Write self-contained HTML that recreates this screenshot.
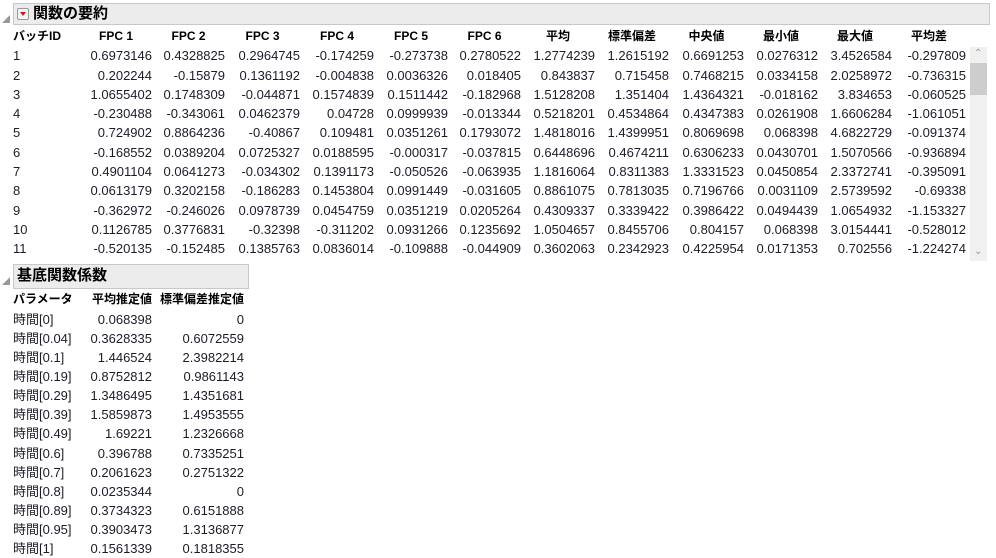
<!DOCTYPE html>
<html><head><meta charset="utf-8"><style>
body{margin:0;width:996px;height:558px;background:#fff;overflow:hidden;font-family:"Liberation Sans","Noto Sans CJK JP",sans-serif;font-size:13px;color:#1c1c28;position:relative}
.hdr{position:absolute;left:13px;background:#ececec;border:1px solid #c8c8c8;box-sizing:border-box;font-weight:bold;font-size:15px;color:#000;line-height:18px}
.tri{position:absolute;left:2px;width:0;height:0;border-left:8px solid transparent;border-bottom:8px solid #999}
table{position:absolute;border-collapse:collapse;table-layout:fixed}
td{padding:0;height:19.3px;text-align:right;white-space:nowrap;line-height:19.3px}
td:first-child{text-align:left}
tr.h td{font-weight:bold;text-align:center;color:#000;font-size:12px}
tr.h td:first-child{text-align:left}
.b td{height:19.08px;line-height:19.08px}
.btn{position:absolute;left:3px;top:4px;width:12px;height:12px;border:1px solid #999;border-radius:2px;background:#f4f4f4;box-sizing:border-box}
.btn:after{content:"";position:absolute;left:2px;top:3px;border-left:3px solid transparent;border-right:3px solid transparent;border-top:4px solid #d01818}
.sb{position:absolute;left:970px;top:47px;width:17px;height:214px;background:#f0f0f0}
.th{position:absolute;left:970px;top:63px;width:17px;height:32px;background:#cdcdcd}
.ar{position:absolute;left:974px;color:#999;font-size:10px}
</style></head><body>
<div class="tri" style="top:15px"></div>
<div class="hdr" style="top:3px;width:977px;height:22px"><div class="btn"></div><span style="position:absolute;left:19px;top:1px">関数の要約</span></div>
<table style="left:13px;top:27px;width:953px">
<colgroup><col style="width:67px"><col style="width:72px"><col style="width:73px"><col style="width:75px"><col style="width:74px"><col style="width:74px"><col style="width:73px"><col style="width:74px"><col style="width:74px"><col style="width:75px"><col style="width:74px"><col style="width:74px"><col style="width:74px"></colgroup>
<tr class="h"><td>バッチID</td><td>FPC 1</td><td>FPC 2</td><td>FPC 3</td><td>FPC 4</td><td>FPC 5</td><td>FPC 6</td><td>平均</td><td>標準偏差</td><td>中央値</td><td>最小値</td><td>最大値</td><td>平均差</td></tr>
<tr><td>1</td><td>0.6973146</td><td>0.4328825</td><td>0.2964745</td><td>-0.174259</td><td>-0.273738</td><td>0.2780522</td><td>1.2774239</td><td>1.2615192</td><td>0.6691253</td><td>0.0276312</td><td>3.4526584</td><td>-0.297809</td></tr>
<tr><td>2</td><td>0.202244</td><td>-0.15879</td><td>0.1361192</td><td>-0.004838</td><td>0.0036326</td><td>0.018405</td><td>0.843837</td><td>0.715458</td><td>0.7468215</td><td>0.0334158</td><td>2.0258972</td><td>-0.736315</td></tr>
<tr><td>3</td><td>1.0655402</td><td>0.1748309</td><td>-0.044871</td><td>0.1574839</td><td>0.1511442</td><td>-0.182968</td><td>1.5128208</td><td>1.351404</td><td>1.4364321</td><td>-0.018162</td><td>3.834653</td><td>-0.060525</td></tr>
<tr><td>4</td><td>-0.230488</td><td>-0.343061</td><td>0.0462379</td><td>0.04728</td><td>0.0999939</td><td>-0.013344</td><td>0.5218201</td><td>0.4534864</td><td>0.4347383</td><td>0.0261908</td><td>1.6606284</td><td>-1.061051</td></tr>
<tr><td>5</td><td>0.724902</td><td>0.8864236</td><td>-0.40867</td><td>0.109481</td><td>0.0351261</td><td>0.1793072</td><td>1.4818016</td><td>1.4399951</td><td>0.8069698</td><td>0.068398</td><td>4.6822729</td><td>-0.091374</td></tr>
<tr><td>6</td><td>-0.168552</td><td>0.0389204</td><td>0.0725327</td><td>0.0188595</td><td>-0.000317</td><td>-0.037815</td><td>0.6448696</td><td>0.4674211</td><td>0.6306233</td><td>0.0430701</td><td>1.5070566</td><td>-0.936894</td></tr>
<tr><td>7</td><td>0.4901104</td><td>0.0641273</td><td>-0.034302</td><td>0.1391173</td><td>-0.050526</td><td>-0.063935</td><td>1.1816064</td><td>0.8311383</td><td>1.3331523</td><td>0.0450854</td><td>2.3372741</td><td>-0.395091</td></tr>
<tr><td>8</td><td>0.0613179</td><td>0.3202158</td><td>-0.186283</td><td>0.1453804</td><td>0.0991449</td><td>-0.031605</td><td>0.8861075</td><td>0.7813035</td><td>0.7196766</td><td>0.0031109</td><td>2.5739592</td><td>-0.69338</td></tr>
<tr><td>9</td><td>-0.362972</td><td>-0.246026</td><td>0.0978739</td><td>0.0454759</td><td>0.0351219</td><td>0.0205264</td><td>0.4309337</td><td>0.3339422</td><td>0.3986422</td><td>0.0494439</td><td>1.0654932</td><td>-1.153327</td></tr>
<tr><td>10</td><td>0.1126785</td><td>0.3776831</td><td>-0.32398</td><td>-0.311202</td><td>0.0931266</td><td>0.1235692</td><td>1.0504657</td><td>0.8455706</td><td>0.804157</td><td>0.068398</td><td>3.0154441</td><td>-0.528012</td></tr>
<tr><td>11</td><td>-0.520135</td><td>-0.152485</td><td>0.1385763</td><td>0.0836014</td><td>-0.109888</td><td>-0.044909</td><td>0.3602063</td><td>0.2342923</td><td>0.4225954</td><td>0.0171353</td><td>0.702556</td><td>-1.224274</td></tr>
</table>
<div class="sb"></div><div class="th"></div>
<div class="ar" style="top:48px">&#8963;</div><div class="ar" style="top:246px">&#8964;</div>
<div class="tri" style="top:277px"></div>
<div class="hdr" style="top:264px;width:236px;height:25px"><span style="position:absolute;left:3px;top:2px">基底関数係数</span></div>
<table class="b" style="left:13px;top:290px;width:231px">
<colgroup><col style="width:70px"><col style="width:69px"><col style="width:92px"></colgroup>
<tr class="h"><td style="height:20px">パラメータ</td><td style="text-align:right">平均推定値</td><td style="text-align:right">標準偏差推定値</td></tr>
<tr><td>時間[0]</td><td>0.068398</td><td>0</td></tr>
<tr><td>時間[0.04]</td><td>0.3628335</td><td>0.6072559</td></tr>
<tr><td>時間[0.1]</td><td>1.446524</td><td>2.3982214</td></tr>
<tr><td>時間[0.19]</td><td>0.8752812</td><td>0.9861143</td></tr>
<tr><td>時間[0.29]</td><td>1.3486495</td><td>1.4351681</td></tr>
<tr><td>時間[0.39]</td><td>1.5859873</td><td>1.4953555</td></tr>
<tr><td>時間[0.49]</td><td>1.69221</td><td>1.2326668</td></tr>
<tr><td>時間[0.6]</td><td>0.396788</td><td>0.7335251</td></tr>
<tr><td>時間[0.7]</td><td>0.2061623</td><td>0.2751322</td></tr>
<tr><td>時間[0.8]</td><td>0.0235344</td><td>0</td></tr>
<tr><td>時間[0.89]</td><td>0.3734323</td><td>0.6151888</td></tr>
<tr><td>時間[0.95]</td><td>0.3903473</td><td>1.3136877</td></tr>
<tr><td>時間[1]</td><td>0.1561339</td><td>0.1818355</td></tr>
</table>
</body></html>
